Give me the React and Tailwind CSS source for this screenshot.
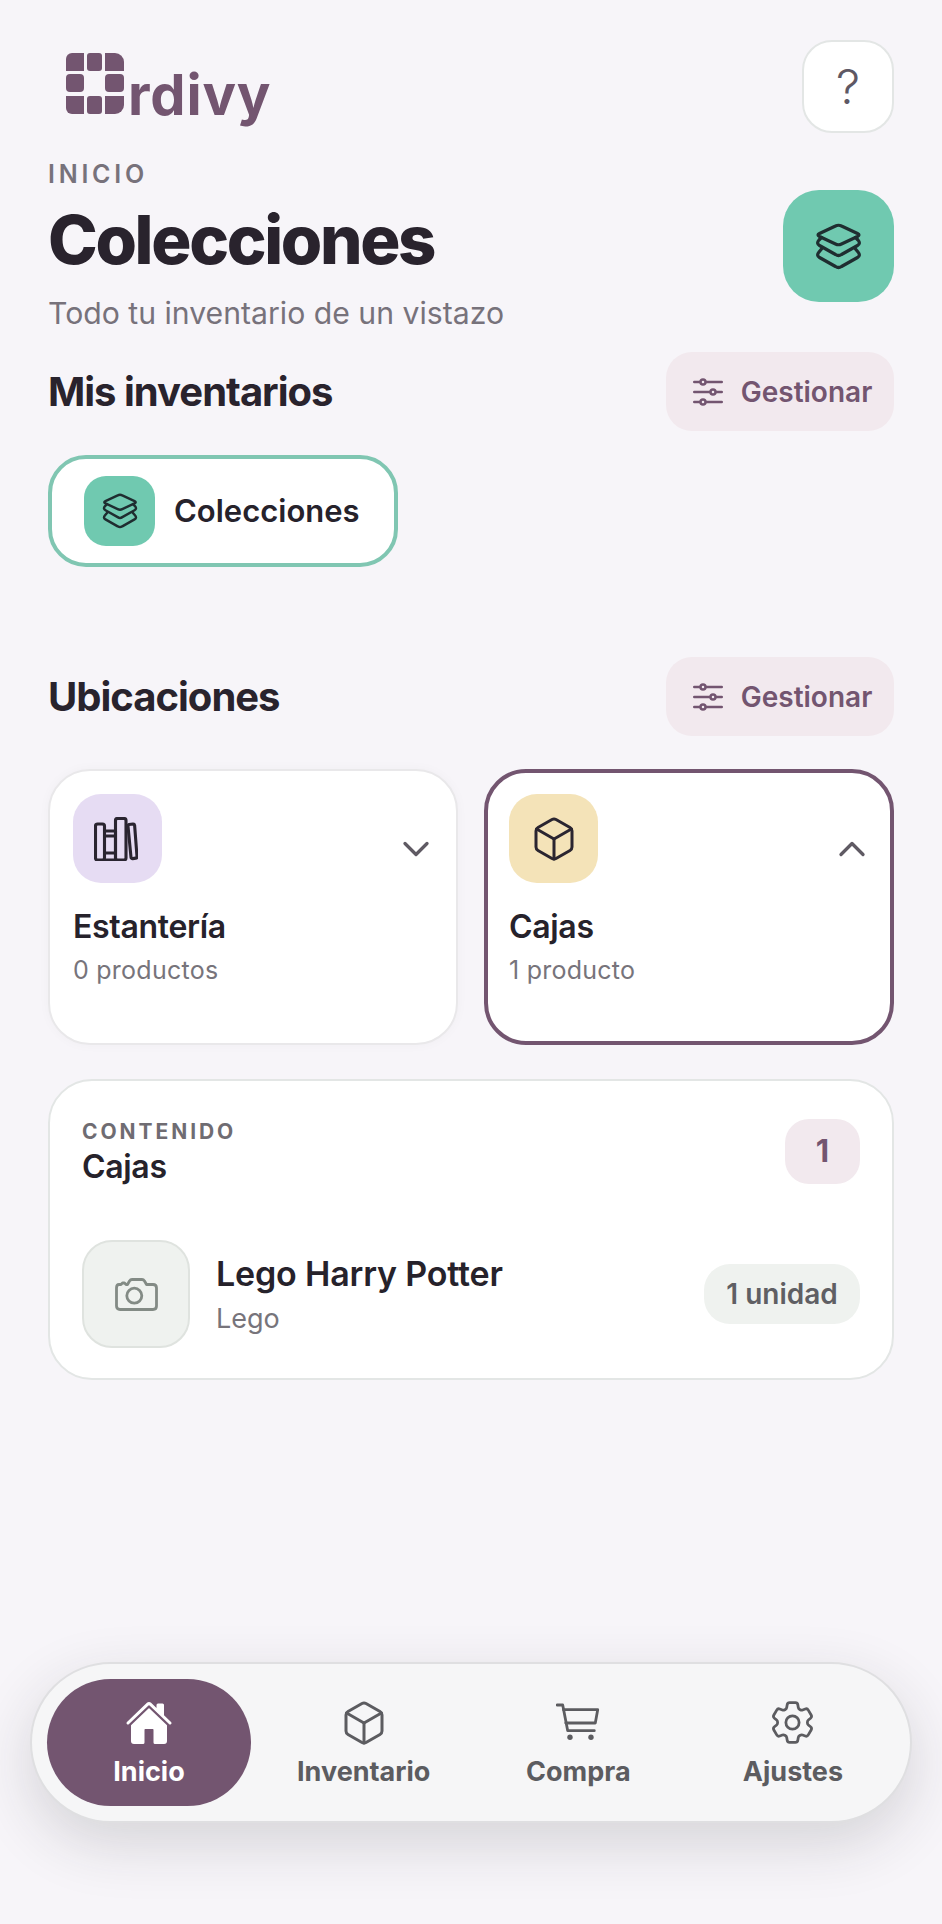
import React from "react";
import { Box, ChevronDown, ChevronUp } from "lucide-react";
import { HiOutlineAdjustmentsHorizontal, HiOutlineCog6Tooth } from "react-icons/hi2";
import { IoHome } from "react-icons/io5";

function LogoMark() {
  return (
    <svg width="58" height="61" viewBox="0 0 58 61" fill="#735570">
      <path d="M6 0h12v18H0V6a6 6 0 0 1 6-6z" />
      <rect x="21" y="0" width="15" height="18" rx="3" />
      <path d="M39 0h10a9 9 0 0 1 9 9v9H39z" />
      <rect x="0" y="21" width="18" height="18" rx="4" />
      <rect x="39" y="21" width="19" height="18" rx="4" />
      <path d="M0 43h18v18H6a6 6 0 0 1-6-6z" />
      <rect x="21" y="43" width="15" height="18" rx="3" />
      <path d="M39 43h19v9a9 9 0 0 1-9 9H39z" />
    </svg>
  );
}

function StackIcon({ size }) {
  return (
    <svg
      width={size}
      height={size}
      viewBox="0 0 46 47"
      fill="none"
      stroke="#1f2d30"
      strokeWidth="3.2"
      strokeLinejoin="round"
      strokeLinecap="round"
    >
      <path d="M20 3Q23 1.5 26 3L42 10.5Q45 12 42 13.5L26 21Q23 22.5 20 21L4 13.5Q1 12 4 10.5Z" />
      <path d="M6 14.5L3.5 17Q.5 20.5 4 22.5L20 31.5Q23 33.5 26 31.5L42 22.5Q45.5 20.5 42.5 17L40 14.5" />
      <path d="M6 26L3.5 29Q.5 32.5 4 34.5L20 43.5Q23 45.5 26 43.5L42 34.5Q45.5 32.5 42.5 29L40 26" />
    </svg>
  );
}

function BooksIcon() {
  return (
    <svg
      className="mr-[3px]"
      width="44"
      height="44"
      viewBox="0 0 44 44"
      fill="none"
      stroke="#2a2530"
      strokeWidth="3.1"
      strokeLinejoin="round"
      strokeLinecap="round"
    >
      <rect x="1.5" y="7" width="9" height="36" rx="2" />
      <path d="M10.5 14h11v29h-11M10.5 19h11M10.5 36h11" />
      <rect x="21.5" y="1.5" width="10.5" height="41.5" rx="2" />
      <path d="M35 7.5l4-.5a1.5 1.5 0 0 1 1.6 1.2L43 39.5a1.5 1.5 0 0 1-1.3 1.6l-3 .5a1.5 1.5 0 0 1-1.7-1.3L34 9.2a1.5 1.5 0 0 1 1-1.7z" />
    </svg>
  );
}

function CameraIcon() {
  return (
    <svg
      width="43"
      height="33"
      viewBox="0 0 43 33"
      fill="none"
      stroke="#838b85"
      strokeWidth="2.8"
      strokeLinejoin="round"
    >
      <path d="M4 6.5H6L7.5 5H9.5L11 6.5H12.5L14.5 3Q15.5 1.5 17 1.5H27Q28.5 1.5 29.5 3L31.5 6.5H38Q41.5 6.5 41.5 10V28Q41.5 31.5 38 31.5H5Q1.5 31.5 1.5 28V10Q1.5 6.5 4 6.5Z" />
      <circle cx="19.3" cy="17.7" r="7.5" />
    </svg>
  );
}

function CartIcon() {
  return (
    <svg
      width="44"
      height="39"
      viewBox="0 0 44 39"
      fill="none"
      stroke="currentColor"
      strokeWidth="2.8"
      strokeLinejoin="round"
      strokeLinecap="round"
    >
      <path d="M1 2H6.7L11.7 27.7H38.3" />
      <path d="M7.5 6.7H41.7L39.3 20H9.8" />
      <circle cx="14" cy="34.3" r="2.7" fill="currentColor" stroke="none" />
      <circle cx="35" cy="34.3" r="2.7" fill="currentColor" stroke="none" />
    </svg>
  );
}

function ManageButton() {
  return (
    <button className="flex h-[79px] w-[228px] items-center justify-center gap-[13px] rounded-[26px] bg-[#f2e9ee] text-[28px] font-semibold text-[#735570]">
      <HiOutlineAdjustmentsHorizontal className="h-[40px] w-[40px]" />
      Gestionar
    </button>
  );
}

function LocationCard({ name, count, selected, iconBg, icon }) {
  return (
    <div
      className={`flex h-[276px] flex-col rounded-[42px] bg-white ${
        selected
          ? "border-4 border-[#735570] px-[21px] pt-[21px]"
          : "border-2 border-[#e9e8ea] px-[23px] pt-[23px] shadow-[0_0_12px_rgba(0,0,0,0.03)]"
      }`}
    >
      <div className="flex items-center justify-between">
        <div
          className={`flex h-[89px] w-[89px] items-center justify-center rounded-[28px] ${iconBg}`}
        >
          {icon}
        </div>
        <div className="mt-[20px] mr-[-5px] text-[#5f5a63]">
          {selected ? (
            <ChevronUp size={44} strokeWidth={1.8} />
          ) : (
            <ChevronDown size={44} strokeWidth={1.8} />
          )}
        </div>
      </div>
      <p className="mt-[24px] text-[32px] leading-[40px] font-semibold tracking-[-0.01em] text-[#26222b]">
        {name}
      </p>
      <p className="mt-[6px] text-[25px] leading-[34px] tracking-[0.01em] text-[#77747b]">
        {count}
      </p>
    </div>
  );
}

function NavItem({ label, icon, active }) {
  return (
    <div
      className={`flex h-[127px] w-[204px] flex-col items-center justify-center rounded-[64px] ${
        active ? "bg-[#735570] text-white" : "text-[#5c5c60]"
      }`}
    >
      <div className="flex h-[52px] items-center justify-center">{icon}</div>
      <span className="mt-[6px] text-[27px] leading-[34px] font-bold">{label}</span>
    </div>
  );
}

export default function App() {
  return (
    <div className="flex h-[1924px] flex-col overflow-hidden bg-[#f7f5f9] px-[48px] [font-family:Inter,sans-serif]">
      {/* top bar */}
      <div className="flex items-start justify-between pt-[40px]">
        <div className="mt-[13px] ml-[18px] flex items-end">
          <LogoMark />
          <span className="mb-[-19px] ml-[4px] text-[56px] leading-[76px] font-bold tracking-[0.015em] text-[#735570]">
            rdivy
          </span>
        </div>
        <button className="flex h-[93px] w-[92px] items-center justify-center rounded-[30px] border-2 border-[#e3e6e5] bg-white text-[48px] font-light text-[#5e5864]">
          ?
        </button>
      </div>

      {/* heading */}
      <div className="mt-[26px] flex items-start justify-between">
        <div>
          <p className="text-[25px] leading-[30px] font-semibold tracking-[0.15em] text-[#77727b]">
            INICIO
          </p>
          <h1 className="mt-[11px] text-[67px] leading-[80px] font-extrabold tracking-[-0.035em] text-[#29232d]">
            Colecciones
          </h1>
          <p className="mt-[14px] text-[30.2px] leading-[38px] text-[#77727b]">
            Todo tu inventario de un vistazo
          </p>
        </div>
        <div className="mt-[31px] flex h-[112px] w-[111px] items-center justify-center rounded-[36px] bg-[#70c9b0]">
          <StackIcon size={47} />
        </div>
      </div>

      {/* mis inventarios */}
      <div className="mt-[20px] flex items-center justify-between">
        <h2 className="text-[40px] font-bold tracking-[-0.025em] text-[#29232d]">Mis inventarios</h2>
        <ManageButton />
      </div>
      <div className="mt-[24px] flex h-[112px] w-[350px] items-center gap-[19px] rounded-[38px] border-4 border-[#80c6b2] bg-white pl-[32px]">
        <div className="flex h-[70px] w-[71px] items-center justify-center rounded-[22px] bg-[#70c9b0]">
          <StackIcon size={36} />
        </div>
        <span className="text-[31px] font-semibold text-[#26222b]">Colecciones</span>
      </div>

      {/* ubicaciones */}
      <div className="mt-[90px] flex items-center justify-between">
        <h2 className="text-[40px] font-bold tracking-[-0.025em] text-[#29232d]">Ubicaciones</h2>
        <ManageButton />
      </div>
      <div className="mt-[33px] grid grid-cols-2 gap-[26px]">
        <LocationCard
          name="Estantería"
          count="0 productos"
          iconBg="bg-[#e6dcf3]"
          icon={<BooksIcon />}
        />
        <LocationCard
          name="Cajas"
          count="1 producto"
          selected
          iconBg="bg-[#f4e3b8]"
          icon={<Box size={48} strokeWidth={1.5} className="text-[#2a2530]" />}
        />
      </div>

      {/* contenido */}
      <div className="mt-[34px] h-[301px] rounded-[44px] border-2 border-[#e3e6e5] bg-white px-[32px] pt-[38px]">
        <div className="flex items-start justify-between">
          <div>
            <p className="text-[21px] leading-[26px] font-bold tracking-[0.14em] text-[#6f6c72]">CONTENIDO</p>
            <p className="mt-[3px] text-[32px] leading-[38px] font-semibold tracking-[-0.01em] text-[#26222b]">Cajas</p>
          </div>
          <div className="flex h-[65px] w-[75px] items-center justify-center rounded-[24px] bg-[#f2e9ee] text-[31px] font-bold text-[#735570]">
            1
          </div>
        </div>
        <div className="mt-[54px] flex items-center">
          <div className="flex h-[108px] w-[108px] items-center justify-center rounded-[30px] border-2 border-[#dfe3df] bg-[#eff2ef]">
            <CameraIcon />
          </div>
          <div className="ml-[26px] flex-1">
            <p className="text-[34px] leading-[44px] font-semibold tracking-[-0.005em] text-[#26222b]">Lego Harry Potter</p>
            <p className="mt-[5px] text-[27px] leading-[36px] text-[#77747b]">Lego</p>
          </div>
          <div className="flex h-[60px] w-[156px] items-center justify-center rounded-[26px] bg-[#eff2ef] text-[28px] font-semibold text-[#5f5f63]">
            1 unidad
          </div>
        </div>
      </div>

      {/* bottom nav */}
      <div className="mx-[-18px] mt-auto mb-[101px] flex h-[161px] items-center justify-between rounded-[81px] border-2 border-[#dfdfe1] bg-[#f6f6f7] px-[15px] shadow-[0_20px_60px_rgba(40,35,45,0.16)]">
        <NavItem label="Inicio" active icon={<IoHome className="h-[48px] w-[48px]" />} />
        <NavItem label="Inventario" icon={<Box size={48} strokeWidth={1.5} />} />
        <NavItem label="Compra" icon={<CartIcon />} />
        <NavItem label="Ajustes" icon={<HiOutlineCog6Tooth className="h-[53px] w-[53px]" strokeWidth={1.25} />} />
      </div>
    </div>
  );
}
